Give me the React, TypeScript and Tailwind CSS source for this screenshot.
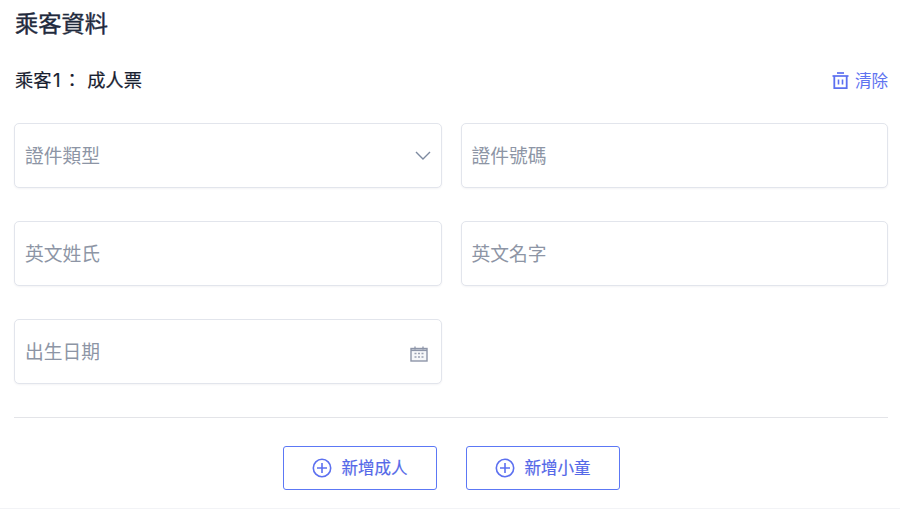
import React from "react";

function Field({ label, icon }: { label: string; icon?: React.ReactNode }) {
  return (
    <div className="h-[65px] rounded-[5px] border border-[#e2e5ec] bg-white shadow-[0_1px_2px_rgba(30,40,70,0.05)] flex items-center justify-between pl-[10px] pr-[10px]">
      <span className="text-[18.75px] leading-[24px] text-[#8d95a5] pt-[2px]">{label}</span>
      {icon}
    </div>
  );
}

function Chevron() {
  return (
    <svg width="16" height="9" viewBox="0 0 16 9" fill="none">
      <path d="M1 1l7 7 7-7" stroke="#7d8aa0" strokeWidth="1.4" />
    </svg>
  );
}

function Calendar() {
  return (
    <svg width="18" height="16" viewBox="0 0 18 16" fill="none" className="mt-[5px] mr-[3px]">
      <rect x="1" y="2.5" width="16" height="12.5" stroke="#8d95a8" strokeWidth="1.4" fill="#f6f7f9" />
      <path d="M1 4.3h16" stroke="#8d95a8" strokeWidth="1.6" />
      <path d="M5 0.5v3M13 0.5v3" stroke="#8d95a8" strokeWidth="1.3" />
      <path d="M4.5 7.5h2M8 7.5h2M11.5 7.5h2M4.5 11h2M8 11h2M11.5 11h2" stroke="#9aa1b2" strokeWidth="1.4" />
    </svg>
  );
}

function Plus() {
  return (
    <svg width="20" height="20" viewBox="0 0 20 20" fill="none">
      <circle cx="10" cy="10" r="8.7" stroke="#5c70f0" strokeWidth="1.6" />
      <path d="M10 5v10M5 10h10" stroke="#5c70f0" strokeWidth="1.6" />
    </svg>
  );
}

function Trash() {
  return (
    <svg width="17" height="18" viewBox="0 0 17 18" fill="none">
      <path d="M0.5 4h16" stroke="#5c70f0" strokeWidth="1.7" />
      <path d="M5 1h7" stroke="#5c70f0" strokeWidth="1.7" />
      <path d="M2.3 4v12.2h12.4V4" stroke="#5c70f0" strokeWidth="1.8" />
      <path d="M6.5 7.5v5M10.5 7.5v5" stroke="#5c70f0" strokeWidth="1.6" />
    </svg>
  );
}

function AddButton({ label }: { label: string }) {
  return (
    <button className="w-[154px] h-[44px] rounded-[3px] border border-[#5c78f5] bg-white flex items-center justify-center gap-[10px] pr-[1px] text-[#5468e8] text-[16.5px] font-normal [-webkit-text-stroke:0.2px_#5468e8]">
      <Plus />
      <span>{label}</span>
    </button>
  );
}

export default function App() {
  return (
    <div
      className="w-[900px] h-[510px] bg-white overflow-hidden flex flex-col"
      style={{ fontFamily: 'Inter, "Noto Sans CJK TC", "Noto Sans", sans-serif' }}
    >
      <div className="h-[509px] px-[14px] pt-[8px] border-b border-[#f2f3f6] flex flex-col">
        <h1 className="text-[23.25px] leading-[32px] font-normal text-[#1f2a3d] pl-[1px] [-webkit-text-stroke:0.4px_#1f2a3d]">乘客資料</h1>
        <div className="mt-[25px] h-[32px] flex items-center justify-between">
          <span className="text-[18.25px] font-normal text-[#18202f] pl-[1px] [-webkit-text-stroke:0.2px_#18202f]">
            乘客<span className="mx-[1.5px] text-[18.5px]">1</span><span className="ml-[1px]">：</span><span className="ml-[6px]">成人票</span>
          </span>
          <span className="flex items-center gap-[6px] text-[16.5px] text-[#5f74f0] mr-[-2px]">
            <Trash />
            清除
          </span>
        </div>
        <div className="mt-[26px] grid grid-cols-2 gap-x-[19px] gap-y-[33px] w-[874px]">
          <Field label="證件類型" icon={<Chevron />} />
          <Field label="證件號碼" />
          <Field label="英文姓氏" />
          <Field label="英文名字" />
          <Field label="出生日期" icon={<Calendar />} />
        </div>
        <div className="mt-[33px] w-[874px] border-t border-[#e3e4e8]" />
        <div className="mt-[28px] flex justify-center gap-[29px] w-[874px] pl-[1px]">
          <AddButton label="新增成人" />
          <AddButton label="新增小童" />
        </div>
      </div>
    </div>
  );
}
